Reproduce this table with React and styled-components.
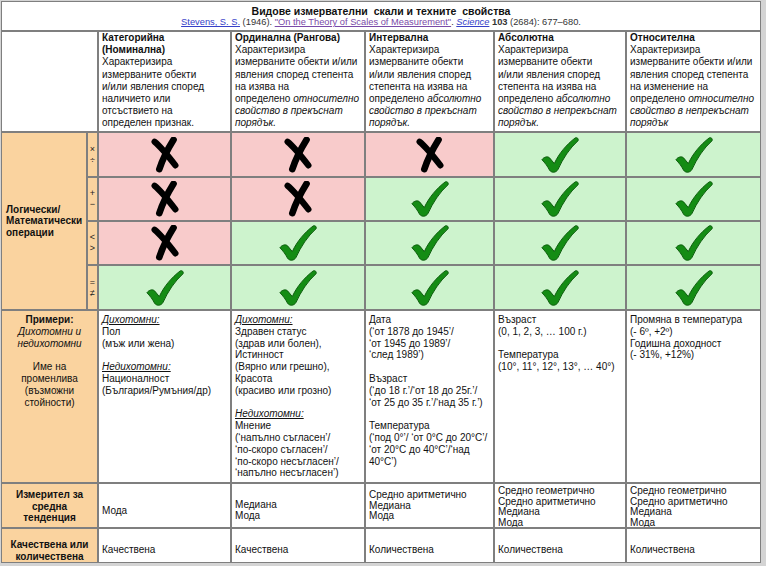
import React from "react";
import styled, { createGlobalStyle } from "styled-components";

const GlobalStyle = createGlobalStyle`
  html, body {
    margin: 0;
    padding: 0;
    background: #d4d4d4;
  }
  body {
    font-family: "Liberation Sans", Arial, sans-serif;
    color: #111;
  }
`;

const PINK = "#f8cbcb";
const GREEN = "#cdf3cd";
const ORANGE = "#fad39f";

const header = [
  {
    title: ["Категорийна", "(Номинална)"],
    plain: ["Характеризира", "измерваните обекти", "и/или явления според", "наличието или", "отсъствието на", "определен признак."],
    italic: [],
  },
  {
    title: ["Ординална (Рангова)"],
    plain: ["Характеризира", "измерваните обекти и/или", "явления според степента", "на изява на"],
    lead: "определено ",
    italic: ["относително", "свойство в прекъснат", "порядък."],
  },
  {
    title: ["Интервална"],
    plain: ["Характеризира", "измерваните обекти", "и/или явления според", "степента на изява на"],
    lead: "определено ",
    italic: ["абсолютно", "свойство в прекъснат", "порядък."],
  },
  {
    title: ["Абсолютна"],
    plain: ["Характеризира", "измерваните обекти", "и/или явления според", "степента на изява на"],
    lead: "определено ",
    italic: ["абсолютно", "свойство в непрекъснат", "порядък."],
  },
  {
    title: ["Относителна"],
    plain: ["Характеризира", "измерваните обекти и/или", "явления според степента", "на изменение на"],
    lead: "определено ",
    italic: ["относително", "свойство в непрекъснат", "порядък"],
  },
];

const operations = [
  { ops: ["×", "÷"], marks: [0, 0, 0, 1, 1] },
  { ops: ["+", "−"], marks: [0, 0, 1, 1, 1] },
  { ops: ["<", ">"], marks: [0, 1, 1, 1, 1] },
  { ops: ["=", "≠"], marks: [1, 1, 1, 1, 1] },
];

const examples = [
  [
    { head: "Дихотомни:" },
    "Пол",
    "(мъж или жена)",
    "",
    { head: "Недихотомни:" },
    "Националност",
    "(България/Румъния/др)",
  ],
  [
    { head: "Дихотомни:" },
    "Здравен статус",
    "(здрав или болен),",
    "Истинност",
    "(Вярно или грешно),",
    "Красота",
    "(красиво или грозно)",
    "",
    { head: "Недихотомни:" },
    "Мнение",
    "(‘напълно съгласен’/",
    "‘по-скоро съгласен’/",
    "‘по-скоро несъгласен’/",
    "‘напълно несъгласен’)",
  ],
  [
    "Дата",
    "(‘от 1878 до 1945’/",
    "‘от 1945 до 1989’/",
    "‘след 1989’)",
    "",
    "Възраст",
    "(‘до 18 г.’/‘от 18 до 25г.’/",
    "‘от 25 до 35 г.’/‘над 35 г.’)",
    "",
    "Температура",
    "(‘под 0°’/ ‘от 0°C до 20°C’/",
    "‘от 20°C до 40°C’/‘над",
    "40°C’)",
  ],
  ["Възраст", "(0, 1, 2, 3, … 100 г.)", "", "Температура", "(10°, 11°, 12°, 13°, … 40°)"],
  ["Промяна в температура", "(- 6º, +2º)", "Годишна доходност", "(- 31%, +12%)"],
];

const tendency = [
  { lines: ["Мода"], top: 22 },
  { lines: ["Медиана", "Мода"], top: 16 },
  { lines: ["Средно аритметично", "Медиана", "Мода"], top: 6 },
  { lines: ["Средно геометрично", "Средно аритметично", "Медиана", "Мода"], top: 2 },
  { lines: ["Средно геометрично", "Средно аритметично", "Медиана", "Мода"], top: 2 },
];

const kind = ["Качествена", "Качествена", "Количествена", "Количествена", "Количествена"];

function Cross() {
  return (
    <MarkSvg width="30" height="36" viewBox="0 0 30 38">
      <path d="M4 5 C 9 9, 16 17, 26 30" stroke="#000" strokeWidth="6.5" strokeLinecap="round" fill="none" />
      <path d="M24 3 C 19 11, 13 22, 9 34" stroke="#000" strokeWidth="7" strokeLinecap="round" fill="none" />
    </MarkSvg>
  );
}

function Check() {
  return (
    <MarkSvg width="38" height="38" viewBox="0 0 40 40">
      <path
        d="M1 25 C 3 22, 7 21, 9 23 L 14 29 C 19 18, 27 9, 36 2 C 38 1, 40 3, 39 5 C 30 13, 23 24, 18 35 C 16 39, 11 39, 9 36 C 7 32, 4 28, 1 25 Z"
        fill="#148c14"
        stroke="#0b5a0b"
        strokeWidth="1"
      />
    </MarkSvg>
  );
}

export default function App() {
  return (
    <>
      <GlobalStyle />
      <Table>
        <TitleCell>
          <Title>Видове измервателни&nbsp; скали и техните&nbsp; свойства</Title>
          <Source>
            <Link href="#">Stevens, S. S.</Link> (1946).{" "}
            <Link href="#" $visited>
              "On the Theory of Scales of Measurement"
            </Link>
            . <Link href="#"><i>Science</i></Link> <b>103</b> (2684): 677–680.
          </Source>
        </TitleCell>

        <CornerCell />
        {header.map((h, i) => (
          <HeadCell key={i}>
            {h.title.map((t) => (
              <b key={t}>
                {t}
                <br />
              </b>
            ))}
            {h.plain.map((t) => (
              <React.Fragment key={t}>
                {t}
                <br />
              </React.Fragment>
            ))}
            {h.lead ? (
              <>
                {h.lead}
                {h.italic.map((t, k) => (
                  <React.Fragment key={k}>
                    <i>{t}</i>
                    <br />
                  </React.Fragment>
                ))}
              </>
            ) : null}
          </HeadCell>
        ))}

        <OpsLabel>
          Логически/
          <br />
          Математически
          <br />
          операции
        </OpsLabel>
        {operations.map((row, i) => (
          <React.Fragment key={i}>
            <OpCell>
              {row.ops.map((o) => (
                <span key={o}>{o}</span>
              ))}
            </OpCell>
            {row.marks.map((m, k) => (
              <MarkCell key={k} $ok={m}>
                {m ? <Check /> : <Cross />}
              </MarkCell>
            ))}
          </React.Fragment>
        ))}

        <ExampleLabel>
          <b>Примери:</b>
          <br />
          <i>Дихотомни и</i>
          <br />
          <i>недихотомни</i>
          <br />
          <br />
          Име на
          <br />
          променлива
          <br />
          (възможни
          <br />
          стойности)
        </ExampleLabel>
        {examples.map((lines, i) => (
          <ExampleCell key={i}>
            {lines.map((l, k) =>
              typeof l === "string" ? (
                <React.Fragment key={k}>
                  {l || "\u00a0"}
                  <br />
                </React.Fragment>
              ) : (
                <React.Fragment key={k}>
                  <SubHead>{l.head}</SubHead>
                  <br />
                </React.Fragment>
              )
            )}
          </ExampleCell>
        ))}

        <RowLabel>
          Измерител за
          <br />
          средна
          <br />
          тенденция
        </RowLabel>
        {tendency.map((t, i) => (
          <ValueCell key={i} $top={t.top}>
            {t.lines.map((l) => (
              <React.Fragment key={l}>
                {l}
                <br />
              </React.Fragment>
            ))}
          </ValueCell>
        ))}

        <RowLabel $shift={10}>
          Качествена или
          <br />
          количествена
        </RowLabel>
        {kind.map((v, i) => (
          <ValueCell key={i} $top={16}>
            {v}
          </ValueCell>
        ))}
      </Table>
    </>
  );
}

const Table = styled.div`
  display: grid;
  grid-template-columns: 84px 9px 131px 132px 127px 130px 133px;
  grid-template-rows: 28px 99px 43px 42px 42px 43px 171px 43px 33px;
  gap: 2px;
  width: 758px;
  margin: 1px 0 0 1px;
  padding: 1px;
  background: #7f7f7f;
  font-size: 10px;
`;

const TitleCell = styled.div`
  grid-column: 1 / -1;
  background: #fff;
  text-align: center;
  padding-top: 4px;
  white-space: nowrap;
`;

const Title = styled.div`
  font-weight: bold;
  font-size: 10.5px;
  line-height: 11px;
`;

const Source = styled.div`
  font-size: 9.3px;
  line-height: 11px;
  color: #333;
`;

const Link = styled.a`
  color: ${(p) => (p.$visited ? "#7a4aa8" : "#3640c8")};
  text-decoration: underline;
`;

const CornerCell = styled.div`
  grid-column: span 2;
  background: #fff;
`;

const HeadCell = styled.div`
  background: #fff;
  padding: 0 3px;
  line-height: 12.2px;
  white-space: nowrap;
  overflow: hidden;
`;

const OpsLabel = styled.div`
  grid-row: span 4;
  background: ${ORANGE};
  display: flex;
  align-items: center;
  padding: 0 4px;
  font-weight: bold;
  line-height: 11.5px;
  white-space: nowrap;
`;

const OpCell = styled.div`
  background: ${ORANGE};
  display: flex;
  flex-direction: column;
  align-items: center;
  justify-content: center;
  font-size: 9px;
  line-height: 11px;
  color: #222;
`;

const MarkCell = styled.div`
  background: ${(p) => (p.$ok ? GREEN : PINK)};
  display: flex;
  align-items: center;
  justify-content: center;
`;

const MarkSvg = styled.svg`
  display: block;
`;

const ExampleLabel = styled.div`
  grid-column: span 2;
  background: ${ORANGE};
  text-align: center;
  padding-top: 3px;
  line-height: 11.8px;
  white-space: nowrap;
`;

const ExampleCell = styled.div`
  background: #fff;
  padding: 3px 3px 0;
  line-height: 11.8px;
  white-space: nowrap;
  overflow: hidden;
`;

const SubHead = styled.i`
  text-decoration: underline;
`;

const RowLabel = styled.div`
  grid-column: span 2;
  background: ${ORANGE};
  display: flex;
  align-items: center;
  justify-content: center;
  text-align: center;
  font-weight: bold;
  line-height: 11.5px;
  padding-top: ${(p) => p.$shift || 2}px;
  white-space: nowrap;
`;

const ValueCell = styled.div`
  background: #fff;
  padding: ${(p) => p.$top}px 3px 0;
  line-height: 10.5px;
  white-space: nowrap;
  overflow: hidden;
`;
